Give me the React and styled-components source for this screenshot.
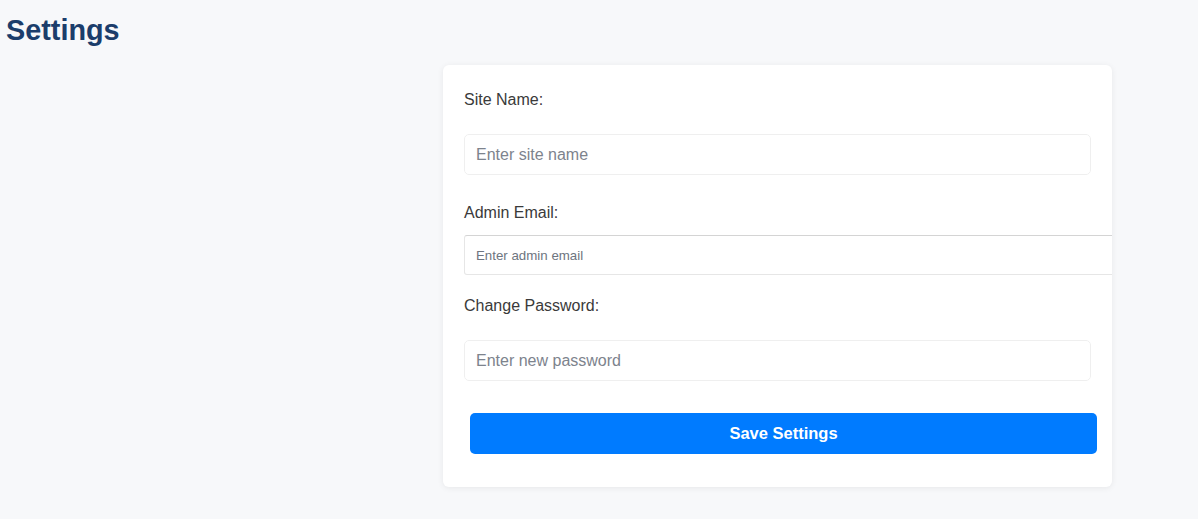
import React from "react";
import styled, { createGlobalStyle } from "styled-components";

const Global = createGlobalStyle`
  html, body { margin: 0; padding: 0; background: #f7f8fa; }
  body { font-family: "Liberation Sans", Arial, sans-serif; }
  * { box-sizing: border-box; }
`;

const Page = styled.div`
  min-height: 519px;
  padding: 13px 0 0 6px;
  display: flex;
  flex-direction: column;
`;

const Title = styled.h1`
  margin: 0;
  font-size: 28.8px;
  line-height: 34px;
  font-weight: 700;
  color: #1b3d6b;
`;

const Card = styled.form`
  align-self: flex-start;
  margin: 18px 0 0 437px;
  width: 669px;
  background: #ffffff;
  border-radius: 6px;
  box-shadow: 0 1px 6px rgba(0, 0, 0, 0.07);
  padding: 25px 21px 33px;
  overflow: hidden;
  display: flex;
  flex-direction: column;
`;

const Label = styled.label`
  display: block;
  font-size: 16px;
  line-height: 19px;
  color: #3a3a3a;
  margin-top: ${(p) => p.$top || 0}px;
  margin-bottom: ${(p) => p.$bottom}px;
`;

const Input = styled.input`
  display: block;
  width: 100%;
  height: 41px;
  padding: 0 11px;
  border: 1px solid #efefef;
  border-radius: 5px;
  font-family: "Liberation Sans", Arial, sans-serif;
  font-size: 16px;
  color: #333;
  background: #fff;
  outline: none;
  &::placeholder { color: #7d838d; }
`;

const PlainInput = styled.input`
  display: block;
  width: calc(100% + 24px);
  height: 40px;
  padding: 0 11px;
  border: 1px solid #e6e6e6;
  border-top-color: #d4d4d4;
  border-radius: 3px;
  font-family: "Liberation Sans", Arial, sans-serif;
  font-size: 13.3px;
  color: #333;
  background: #fff;
  outline: none;
  &::placeholder { color: #6e7580; }
`;

const Button = styled.button`
  margin: 32px 0 0 6px;
  width: 100%;
  height: 41px;
  border: none;
  border-radius: 5px;
  background: #007bff;
  color: #fff;
  font-family: "Liberation Sans", Arial, sans-serif;
  font-size: 16.5px;
  font-weight: 700;
  cursor: pointer;
`;

export default function App() {
  return (
    <>
      <Global />
      <Page>
        <Title>Settings</Title>
        <Card onSubmit={(e) => e.preventDefault()}>
          <Label $bottom={25}>Site Name:</Label>
          <Input type="text" placeholder="Enter site name" />
          <Label $top={28} $bottom={13}>Admin Email:</Label>
          <PlainInput type="email" placeholder="Enter admin email" />
          <Label $top={21} $bottom={25}>Change Password:</Label>
          <Input type="password" placeholder="Enter new password" />
          <Button type="submit">Save Settings</Button>
        </Card>
      </Page>
    </>
  );
}
